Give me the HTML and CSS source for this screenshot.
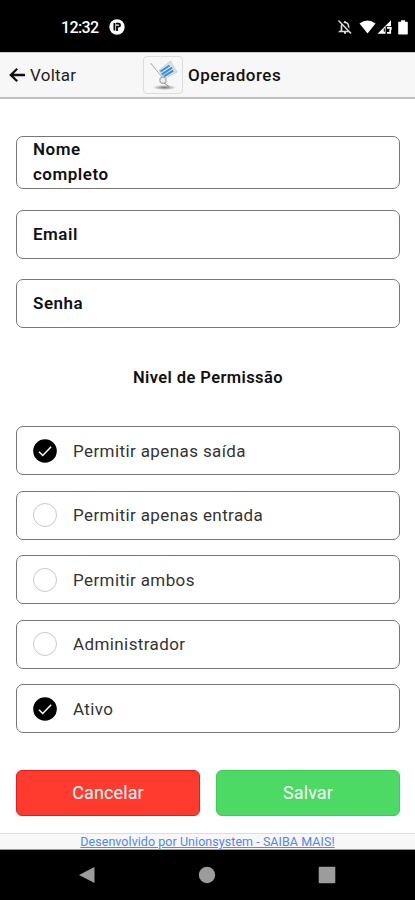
FILE: index.html
```html
<!DOCTYPE html>
<html lang="pt-BR">
<head>
<meta charset="UTF-8" />
<meta name="viewport" content="width=device-width, initial-scale=1" />
<title>Operadores</title>
<link rel="stylesheet" href="styles.css">
</head>
<body>

<div class="status-bar">
  <span class="clock">12:32</span>
  <svg class="app-icon" width="16" height="16" viewBox="0 0 16 16">
    <circle cx="8" cy="8" r="7.7" fill="#fff"/>
    <path d="M5.4 4v7.5M7 4.7h2.6a1.5 1.5 0 0 1 0 3H8V12" fill="none" stroke="#000" stroke-width="1.8"/>
  </svg>
  <div class="status-icons">
    <svg width="16" height="16" viewBox="0 0 16 16">
      <path d="M4.5 11.5V7a3.5 3.5 0 0 1 7 0v4.5l1.3 1H3.2zM8 2v1.5M7 14h2" fill="none" stroke="#ddd" stroke-width="1.7"/>
      <path d="M2.8 1l12 13" stroke="#000" stroke-width="2.4"/>
      <path d="M1.5 1.5l12.5 13" stroke="#ddd" stroke-width="1.5"/>
    </svg>
    <svg class="wifi" width="17" height="14" viewBox="0 0 17 14">
      <path d="M0.5 3.6Q8.5-2.6 16.5 3.6L8.5 13.6z" fill="#fff"/>
    </svg>
    <svg class="signal" width="15" height="14" viewBox="0 0 15 14">
      <path d="M0.5 13.7L14 0.3V6.3H8.6v7.4z" fill="#fff"/>
      <path d="M10 7.8h3.8v2M10 12.8h3.2v-3.2" fill="none" stroke="#fff" stroke-width="1.8"/>
      <path d="M7.3 8.5v3.2" stroke="#000" stroke-width="1.1"/>
    </svg>
    <svg class="battery" width="10" height="15" viewBox="0 0 10 15">
      <path d="M3 0.3h4v1.5h2q.8 0 .8.8v11.2q0 .8-.8.8H1q-.8 0-.8-.8V2.6q0-.8.8-.8h2z" fill="#fff"/>
    </svg>
  </div>
</div>

<header class="navbar">
  <a class="back" href="#">
    <svg width="17" height="16" viewBox="0 0 17 16">
      <path d="M8.2 1.7L1.8 8l6.4 6.3M2 8h14" fill="none" stroke="#111" stroke-width="2.3"/>
    </svg>
    <span>Voltar</span>
  </a>
  <div class="title">
    <div class="logo">
      <svg width="38" height="36" viewBox="0 0 38 36">
        <defs>
          <radialGradient id="shadow">
            <stop offset="0" stop-color="#777"/>
            <stop offset="1" stop-color="#777" stop-opacity="0"/>
          </radialGradient>
        </defs>
        <ellipse cx="20.5" cy="30.5" rx="12" ry="2.6" fill="url(#shadow)"/>
        <path d="M6.5 6L18.5 20.5" stroke="#aaa" stroke-width="1"/>
        <path d="M15 13L26.5 4L33 15L20 22z" fill="#dce0e4" stroke="#c4c8cb" stroke-width=".7"/>
        <path d="M16.5 14.5L25.5 8.5M17.8 17.3L28.2 10.7M19.8 19.4L29.3 13.6" stroke="#3a8fd8" stroke-width="2.1"/>
        <circle cx="19" cy="23.3" r="3.1" fill="#eee" stroke="#aaa" stroke-width="1.2"/>
        <path d="M20 26l5 3.5" stroke="#888" stroke-width="1"/>
      </svg>
    </div>
    <h1>Operadores</h1>
  </div>
</header>

<main class="content">
  <form>
    <div class="field field-tall">
      <label>Nome completo</label>
    </div>
    <div class="field">
      <label>Email</label>
    </div>
    <div class="field">
      <label>Senha</label>
    </div>

    <h2>Nivel de Permissão</h2>

    <div class="options">
      <div class="option">
        <svg class="check" width="24" height="24" viewBox="0 0 24 24">
          <circle cx="12" cy="12" r="11.8" fill="#000"/>
          <path d="M6 12.8l3.7 3.7L18.2 7.8" fill="none" stroke="#fff" stroke-width="1.5"/>
        </svg>
        <span>Permitir apenas saída</span>
      </div>
      <div class="option">
        <span class="circle"></span>
        <span>Permitir apenas entrada</span>
      </div>
      <div class="option">
        <span class="circle"></span>
        <span>Permitir ambos</span>
      </div>
      <div class="option">
        <span class="circle"></span>
        <span>Administrador</span>
      </div>
      <div class="option">
        <svg class="check" width="24" height="24" viewBox="0 0 24 24">
          <circle cx="12" cy="12" r="11.8" fill="#000"/>
          <path d="M6 12.8l3.7 3.7L18.2 7.8" fill="none" stroke="#fff" stroke-width="1.5"/>
        </svg>
        <span>Ativo</span>
      </div>
    </div>

    <div class="actions">
      <button type="button" class="btn-cancel">Cancelar</button>
      <button type="button" class="btn-save">Salvar</button>
    </div>
  </form>
</main>

<footer class="footer">
  <a href="#">Desenvolvido por Unionsystem - SAIBA MAIS!</a>
</footer>

<div class="android-nav">
  <svg width="18" height="18" viewBox="0 0 18 18"><path d="M16.5 1v16L1 9z" fill="#9c9c9c"/></svg>
  <svg width="18" height="18" viewBox="0 0 18 18"><circle cx="9" cy="9" r="8.2" fill="#9c9c9c"/></svg>
  <svg width="18" height="18" viewBox="0 0 18 18"><rect x=".7" y=".7" width="16.6" height="16.6" rx="1" fill="#9c9c9c"/></svg>
</div>

</body>
</html>
```

FILE: styles.css
```css
* {
  box-sizing: border-box;
}
body {
  margin: 0;
  height: 900px;
  display: flex;
  flex-direction: column;
  background: #fff;
  color: #111;
  font-family: Roboto, sans-serif;
  font-size: 17px;
  letter-spacing: 0.4px;
  overflow: hidden;
}
svg {
  display: block;
  flex: none;
}

/* android status bar */
.status-bar {
  height: 52px;
  flex: none;
  display: flex;
  align-items: center;
  padding: 2px 7px 0 61px;
  background: #000;
  color: #fff;
}
.clock {
  width: 48px;
  font-size: 16px;
  font-weight: 500;
  letter-spacing: -0.6px;
}
.status-icons {
  display: flex;
  align-items: center;
  margin-left: auto;
}
.wifi {
  margin-left: 6px;
}
.signal {
  margin-left: 1px;
}
.battery {
  margin-left: 6px;
}

/* top bar */
.navbar {
  height: 47px;
  flex: none;
  display: flex;
  align-items: center;
  padding-left: 9px;
  background: #f7f7f7;
  border-top: 1px solid #c8c8c8;
  border-bottom: 2px solid #c0c0c0;
}
.back {
  width: 134px;
  display: flex;
  align-items: center;
  gap: 4px;
  color: #222;
  letter-spacing: 0.25px;
  text-decoration: none;
}
.title {
  display: flex;
  align-items: center;
  gap: 5px;
}
.logo {
  width: 40px;
  height: 38px;
  border: 1px solid #ddd;
  border-radius: 4px;
}
h1 {
  margin: 0;
  font-size: 17px;
  font-weight: 500;
  letter-spacing: 0.5px;
}

/* form */
.content {
  flex: 1;
  padding: 37px 15px 0 16px;
}
.field {
  height: 49px;
  margin-bottom: 20.5px;
  padding-left: 16px;
  display: flex;
  align-items: center;
  border: 1px solid #777;
  border-radius: 7px;
}
.field-tall {
  height: 53px;
  padding-bottom: 2px;
}
.field label {
  width: 100px;
  font-weight: 600;
  letter-spacing: 0.5px;
  line-height: 25px;
}
h2 {
  margin: 40px 0 38px;
  font-size: 16.5px;
  font-weight: 600;
  line-height: 20px;
  text-align: center;
}
.options {
  display: flex;
  flex-direction: column;
  gap: 15.5px;
}
.option {
  height: 49px;
  display: flex;
  align-items: center;
  gap: 16px;
  padding-left: 16px;
  border: 1px solid #777;
  border-radius: 7px;
  color: #333;
}
.circle {
  width: 24px;
  height: 24px;
  border: 1px solid #c8c8c8;
  border-radius: 50%;
}
.actions {
  display: grid;
  grid-template-columns: 1fr 1fr;
  gap: 16px;
  margin-top: 37px;
}
button {
  height: 46px;
  padding: 0 0 2px;
  border: 1px solid;
  border-radius: 6px;
  color: #fff;
  font-family: inherit;
  font-size: 18px;
  letter-spacing: 0.1px;
}
.btn-cancel {
  background: #ff3b30;
  border-color: #f01a14;
}
.btn-save {
  background: #4cd964;
  border-color: #38d052;
}

.footer {
  height: 17px;
  flex: none;
  background: #f7f7f7;
  border-top: 1px solid #ddd;
  border-bottom: 1px solid #999;
  text-align: center;
  line-height: 13px;
}
.footer a {
  color: #5585ee;
  font-size: 12.5px;
  letter-spacing: 0.05px;
}

/* android navigation buttons */
.android-nav {
  height: 50px;
  flex: none;
  display: flex;
  justify-content: center;
  align-items: center;
  gap: 102px;
  padding-right: 1px;
  background: #000;
}
```
